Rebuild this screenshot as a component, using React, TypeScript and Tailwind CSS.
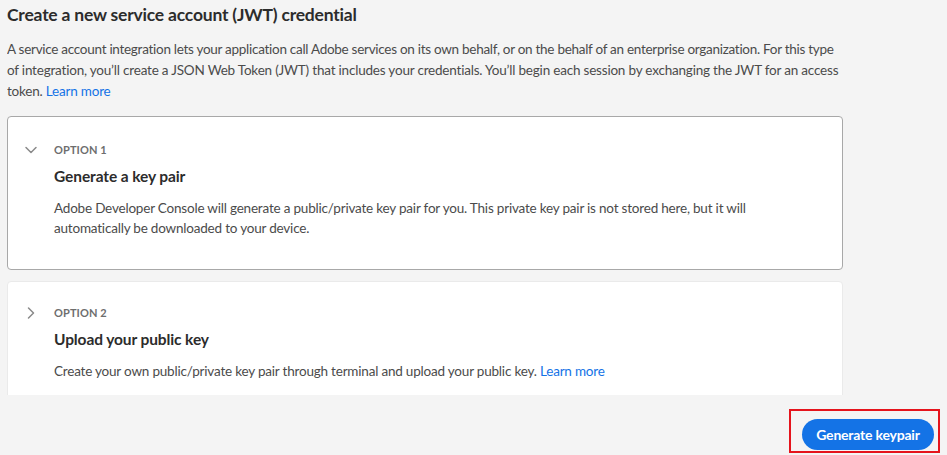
import React from 'react';
import { ChevronDown, ChevronRight } from 'lucide-react';

const font = { fontFamily: 'Lato, "Noto Sans", sans-serif' };

interface OptionProps {
  label: string;
  title: string;
  open: boolean;
  active?: boolean;
  children: React.ReactNode;
}

const OptionCard = ({ label, title, open, active, children }: OptionProps) => (
  <div
    className={`shrink-0 rounded-[4px] bg-white border ${active ? 'border-[#a8a8a8] pt-[23px] pb-[31px]' : 'border-[#eaeaea] pt-[21px] pb-[30px]'} pl-[16px] pr-4`}
  >
    <div className="flex items-center h-[20px]">
      <span className="w-[30px] flex justify-start ml-[-3px] mr-[3px] text-[#8a8a8a]">
        {open ? <ChevronDown size={20} strokeWidth={1.8} /> : <ChevronRight size={20} strokeWidth={1.8} />}
      </span>
      <span className="text-[11px] font-bold tracking-[0.1px] text-[#6e6e6e]">{label}</span>
    </div>
    <div className="pl-[30px]">
      <h3 className="mt-[6px] text-[15.5px] leading-[20px] font-bold tracking-[-0.1px] text-[#2c2c2c]">{title}</h3>
      <div className="mt-[12px] text-[13.5px] leading-[20px] tracking-[-0.2px] text-[#4b4b4b]">{children}</div>
    </div>
  </div>
);

export default function App() {
  return (
    <div className="w-[947px] h-[455px] bg-[#f4f4f4] overflow-hidden relative" style={font}>
      <div className="w-[840px] ml-[7px] flex flex-col h-[395px] overflow-hidden">
        <h2 className="mt-[4px] text-[17.5px] leading-[22px] font-bold tracking-[-0.2px] text-[#2c2c2c]">
          Create a new service account (JWT) credential
        </h2>
        <div className="mt-[13px] text-[13.5px] leading-[21px] tracking-[-0.2px] text-[#4b4b4b] whitespace-nowrap">
          <p className="tracking-[-0.28px]">
            A service account integration lets your application call Adobe services on its own behalf, or on the behalf of an enterprise organization. For this type
          </p>
          <p>
            of integration, you’ll create a JSON Web Token (JWT) that includes your credentials. You’ll begin each session by exchanging the JWT for an access
          </p>
          <p>
            token. <span className="text-[#1473e6]">Learn more</span>
          </p>
        </div>
        <div className="mt-[14px] w-[836px] flex flex-col gap-[11px]">
          <OptionCard label="OPTION 1" title="Generate a key pair" open active>
            <p className="whitespace-nowrap">
              Adobe Developer Console will generate a public/private key pair for you. This private key pair is not stored here, but it will
            </p>
            <p className="whitespace-nowrap">automatically be downloaded to your device.</p>
          </OptionCard>
          <OptionCard label="OPTION 2" title="Upload your public key" open={false}>
            <p className="whitespace-nowrap">
              Create your own public/private key pair through terminal and upload your public key.{' '}
              <span className="text-[#1473e6]">Learn more</span>
            </p>
          </OptionCard>
        </div>
      </div>
      <div className="flex justify-end pr-[7px] mt-[14px]">
        <div className="border-2 border-[#e5141c] pl-[11px] pr-[4px] pt-[8px] pb-[1px]">
          <button className="h-[31px] w-[132px] rounded-full bg-[#1473e6] text-white text-[14px] font-bold tracking-[-0.2px]">
            Generate keypair
          </button>
        </div>
      </div>
    </div>
  );
}
